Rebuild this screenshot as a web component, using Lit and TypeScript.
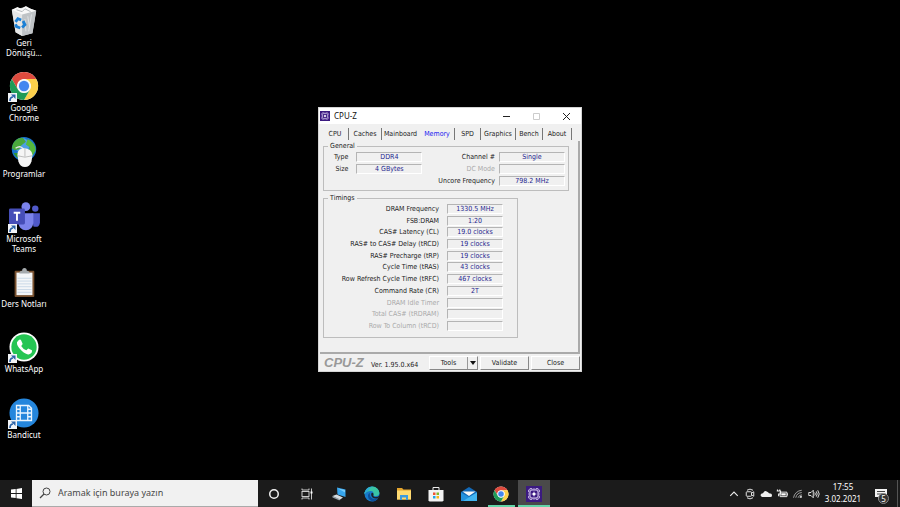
import { LitElement, html, svg, css, TemplateResult } from "lit";
import { customElement, property } from "lit/decorators.js";
import { classMap } from "lit/directives/class-map.js";

const chromeArt = svg`
  <circle cx="16" cy="16" r="15" fill="#fff"/>
  <path d="M3 8.5A15 15 0 0 1 29 8.5H16A7.5 7.5 0 0 0 9.5 19.7Z" fill="#dd4b3e"/>
  <path d="M29 8.5A15 15 0 0 1 16 31L22.5 19.7A7.5 7.5 0 0 0 16 8.5Z" fill="#fdd04b"/>
  <path d="M16 31A15 15 0 0 1 3 8.5L9.5 19.7A7.5 7.5 0 0 0 22.5 19.7Z" fill="#1f9b57"/>
  <circle cx="16" cy="16" r="7" fill="#f4f6f8"/>
  <circle cx="16" cy="16" r="5.5" fill="#4486f0"/>`;

const chipArt = svg`
  <rect width="32" height="32" fill="#3b1a80"/>
  <g fill="none" stroke="#d9cbf0" stroke-width="2">
    <rect x="8" y="8" width="16" height="16" rx="4"/>
    <path d="M12 8V5H8V8H5V12H8M20 8V5H24V8H27V12H24M12 24V27H8V24H5V20H8M20 24V27H24V24H27V20H24M16 8V4M16 28V24M8 16H4M28 16H24" stroke-width="1.5"/>
    <path d="M16 11V21M11 16H21" stroke-width="1.4"/>
  </g>
  <circle cx="16" cy="16" r="3" fill="#fff"/>`;

const desktopArt: Record<string, TemplateResult> = {
  bin: svg`
    <path d="M3 4L18 1L29 5L25 29L14 32L7 28Z" fill="#d3d6d8"/>
    <path d="M3 4L14 8L14 32L7 28Z" fill="#e4e6e7"/>
    <path d="M14 8L29 5L25 29L14 32Z" fill="#bfc3c6"/>
    <path d="M3 4L9 1L13 3L18 0L23 3L29 5L14 9Z" fill="#f8f8f8"/>
    <path d="M8 4L14 6L17 3L23 6" fill="none" stroke="#aeb3b7"/>
    <path d="M20 11L22 23M24 9L21 27M17 14L18 27" stroke="#dfe2e4" fill="none"/>
    <g fill="none" stroke="#1b80d6" stroke-width="3">
      <path d="M7 17L9.500 13.500L13 15M15 16L17 20L14 23M12 23.500L8 22L7 19.500"/>
    </g>`,
  chrome: chromeArt,
  globe: svg`
    <circle cx="16" cy="13" r="13" fill="#1973cc"/>
    <circle cx="14" cy="9" r="8" fill="#6ebcf2" opacity=".6"/>
    <path d="M4 8Q8 0 15 1L18 5L13 9L11 13L6 14L3 12Z" fill="#4aa83c"/>
    <path d="M20 2Q28 6 28.500 14L25 20L21 16L22 11L18 8Z" fill="#57b93d"/>
    <path d="M5 17L11 17L12 23Q7 22 5 17Z" fill="#329634"/>
    <path d="M7 12Q13 8 16 14" fill="none" stroke="#e5e5e5" stroke-width="1.5"/>
    <path d="M9 19Q9 12 16 12Q24 12 25 19L24 26Q22 32 17 32Q12 32 10 26Z" fill="#f5f5f5"/>
    <path d="M9 20Q17 23 25 20M17 12V21" fill="none" stroke="#bbb"/>`,
  teams: svg`
    <circle cx="18" cy="5" r="4.700" fill="#7b83eb"/>
    <circle cx="28" cy="7" r="3.400" fill="#5059c9"/>
    <path d="M24 12H33V22Q32 28 26 26Z" fill="#5059c9"/>
    <path d="M10 12H26V22Q25 30 18 30Q11 30 10 22Z" fill="#7b83eb"/>
    <rect x="0" y="7" width="17" height="17" rx="1.500" fill="#464eb8"/>
    <path d="M5 11.500H12M8.500 11.500V20" stroke="#fff" stroke-width="2"/>`,
  notes: svg`
    <rect x="6" y="4" width="21" height="28" rx="1" fill="#77502f"/>
    <rect x="8" y="6" width="17" height="24" fill="#f4f6f8"/>
    <path d="M9 12H24M9 15H24M9 18H24M9 21H24M9 24H24M9 27H24" stroke="#c9d8e6"/>
    <path d="M11 7Q11 4 14 4Q14 1 16.500 1Q19 1 19 4Q22 4 22 7Z" fill="#a5aaad"/>`,
  whatsapp: svg`
    <circle cx="16" cy="16" r="15.500" fill="#fff"/>
    <circle cx="16" cy="16" r="13.500" fill="#25c553"/>
    <path d="M10 9Q12 7 13 9L14.500 12.500Q14.500 13.500 13 15Q15 18.500 18.500 19.500L20.500 17.500L24.500 19.500Q25 23 21 24Q18 24 13.500 20Q8 15 8.500 11Z" fill="#fff"/>`,
  film: svg`
    <circle cx="16" cy="16" r="15.500" fill="#2586dc"/>
    <g fill="none" stroke="#eaf5ff" stroke-width="1.400">
      <path d="M8 8H21L24 11V24H8ZM12 8V24M20 8V24M12 16H20M8 12H12M8 16H12M8 20H12M20 12H24M20 16H24M20 20H24"/>
    </g>`,
};

const taskArt: Record<string, TemplateResult> = {
  cortana: svg`<circle cx="16" cy="16" r="8.500" fill="none" stroke="#f2f2f2" stroke-width="3"/>`,
  view: svg`<g fill="none" stroke="#ddd" stroke-width="1.800">
    <rect x="6" y="11" width="14" height="10"/><path d="M6 5V8H20V5M6 27V24H20V27M25 5V27"/></g>
    <rect x="23" y="11" width="4" height="4" fill="#fff"/>`,
  computer: svg`
    <path d="M12 3L29 7V22L13 17Z" fill="#36a5ed"/><path d="M14 5L28 8V13Z" fill="#79ccfa"/>
    <path d="M3 20L11 17L24 23L17 28Z" fill="#d7dde1"/><path d="M3 20L17 26V29L3 23Z" fill="#929ca3"/>`,
  edge: svg`
    <circle cx="16" cy="16" r="15" fill="#1779c9"/>
    <path d="M1 13Q5 1 17 1Q29 2 31 14Q30 21 22 20Q18 20 19 17Q20 9 12 10Q6 10 1 16Z" fill="#3ac5a5"/>
    <path d="M1 13Q6 1 18 1Q10 3 8 10Q4 11 1 16Z" fill="#2ba6db"/>
    <path d="M12 14Q10 23 19 26Q24 27 28 24Q24 31 17 31Q7 27 8 18Q9 15 12 14Z" fill="#0c4f98"/>
    <path d="M19 17Q17 21 23 22Q28 22 31 19L29 24Q21 27 16 22Q13 18 15 14Q19 12 19 17Z" fill="#1e2328"/>`,
  folder: svg`
    <path d="M2 4H12L15 7H30V27H2Z" fill="#e5a52d"/><rect x="2" y="9" width="28" height="18" fill="#ffdb72"/>
    <path d="M8 28V18H24V28H20V23H12V28Z" fill="#3d9be0"/>`,
  store: svg`
    <path d="M10 9V3H22V9" fill="none" stroke="#eee" stroke-width="2"/>
    <path d="M1 8H31V29L29 31H3L1 29Z" fill="#f3f3f3"/>
    <path d="M10 13H15V18H10Z" fill="#ef5532"/><path d="M17 13H22V18H17Z" fill="#80b928"/>
    <path d="M10 20H15V25H10Z" fill="#22a4e5"/><path d="M17 20H22V25H17Z" fill="#f9b817"/>`,
  mail: svg`
    <path d="M0 12L16 2L32 12V30H0Z" fill="#1269b7"/>
    <path d="M0 13L16 22L32 13V30H0Z" fill="#2492de"/><path d="M32 13V30H4Z" fill="#42b5f1"/>
    <path d="M3 11H29L16 20Z" fill="#f7f7f7"/>`,
  chrome: chromeArt,
  cpuz: chipArt,
};

const trayArt: [string, TemplateResult][] = [
  ["Show hidden icons", svg`<path d="M3 10.500L8 5.500L13 10.500" fill="none" stroke="#eee" stroke-width="1.500"/>`],
  ["Meet now", svg`<g fill="none" stroke="#e4e4e4" stroke-width="1.300"><rect x="3" y="5" width="7" height="6" rx="1"/><path d="M10 7L13 5V11L10 9M4 3Q8 0 12 3M4 13Q8 16 12 13"/></g>`],
  ["OneDrive", svg`<path d="M3 12Q0 11 1 8.500Q2 7 4 7Q6 3 9 4.500Q11 5 12 7Q16 7 16 10Q16 12 14 12Z" fill="#efefef"/>`],
  ["Battery", svg`<path d="M5.500 5.500H14.500V11.500H5.500ZM15.500 7V10" fill="none" stroke="#eee" stroke-width="1.300"/><path d="M7 7H13V10H7Z" fill="#fff"/><path d="M1 4H6V8H3.500V11M2 2V4M5 2V4" stroke="#eee" stroke-width="1.500" fill="none"/>`],
  ["Network", svg`<g fill="none" stroke="#aaa" stroke-width="1.200"><path d="M2 13A12 12 0 0 1 13 3M5 13A9 9 0 0 1 13 6M8 13A6 6 0 0 1 13 9"/></g><path d="M10 13A4 4 0 0 1 13 10V13Z" fill="#eee"/>`],
  ["Volume", svg`<g fill="none" stroke="#eee" stroke-width="1.200"><path d="M1 6H4L7 3V13L4 10H1ZM9 6Q10.500 8 9 10M11 4.500Q13.500 8 11 11.500M13 3Q17 8 13 13"/></g>`],
];

@customElement("desktop-shortcut")
class DesktopShortcut extends LitElement {
  @property() icon = "";
  @property() label = "";
  @property({ type: Boolean }) linked = false;

  static styles = css`
    :host { display: block; }
    .shortcut { display: flex; flex-direction: column; align-items: center; gap: 1px; color: #fff;
      text-decoration: none; text-align: center; font: 8px/10px "Noto Sans", sans-serif; }
    .picture { position: relative; display: flex; }
    .art { width: 30px; height: 32px; overflow: visible; }
    .arrow { position: absolute; left: -1px; bottom: 0; width: 9px; height: 9px; }
    .label { white-space: pre-line; }
  `;

  render() {
    return html`<a class="shortcut" href="#">
      <span class="picture">
        <svg class="art" viewBox="0 0 32 32" aria-hidden="true">${desktopArt[this.icon]}</svg>
        ${this.linked
          ? html`<svg class="arrow" viewBox="0 0 9 9" aria-hidden="true"><rect width="9" height="9" fill="#f1f3f6"/><path d="M2 8Q2 4 5 4" fill="none" stroke="#2a62a8" stroke-width="1.700"/><path d="M3 1.500H7.500V6Z" fill="#2a62a8"/></svg>`
          : ""}
      </span>
      <span class="label">${this.label}</span>
    </a>`;
  }
}

interface Readout { label: string; value: string; off?: boolean; }

const typeRows: Readout[] = [
  { label: "Type", value: "DDR4" },
  { label: "Size", value: "4 GBytes" },
];
const channelRows: Readout[] = [
  { label: "Channel #", value: "Single" },
  { label: "DC Mode", value: "", off: true },
  { label: "Uncore Frequency", value: "798.2 MHz" },
];
const timingRows: Readout[] = [
  { label: "DRAM Frequency", value: "1330.5 MHz" },
  { label: "FSB:DRAM", value: "1:20" },
  { label: "CAS# Latency (CL)", value: "19.0 clocks" },
  { label: "RAS# to CAS# Delay (tRCD)", value: "19 clocks" },
  { label: "RAS# Precharge (tRP)", value: "19 clocks" },
  { label: "Cycle Time (tRAS)", value: "43 clocks" },
  { label: "Row Refresh Cycle Time (tRFC)", value: "467 clocks" },
  { label: "Command Rate (CR)", value: "2T" },
  { label: "DRAM Idle Timer", value: "", off: true },
  { label: "Total CAS# (tRDRAM)", value: "", off: true },
  { label: "Row To Column (tRCD)", value: "", off: true },
];

@customElement("cpuz-window")
class CpuzWindow extends LitElement {
  static styles = css`
    :host { display: block; box-sizing: border-box; border: 1px solid #d4d4d4; background: #f0f0f0;
      color: #222; font: 7px/10px "DejaVu Sans Condensed", "DejaVu Sans", sans-serif; }
    * { box-sizing: border-box; }
    button { font: inherit; color: inherit; border: 0; padding: 0; background: none; }
    .title { display: flex; align-items: center; height: 16px; background: #fff; }
    .chip { width: 10px; height: 10px; margin: 0 4px 0 1px; }
    .name { flex: 1; margin: 0; font: 8px/12px "Noto Sans", sans-serif; color: #111; }
    .caption { width: 30px; height: 16px; display: flex; align-items: center; justify-content: center; }
    .caption svg { width: 9px; height: 9px; }
    .tabs { display: grid; grid-template-columns: 27fr 33fr 38fr 35fr 26fr 35fr 27fr 29fr; padding: 4px 9px 1px 3px; }
    .tab { height: 12px; border-right: 1px solid #777; white-space: nowrap; }
    .tab.plain { border-right-color: transparent; }
    .tab.active { color: #1818f0; }
    .page { margin: 0 1px; padding: 0 9px 14px 3px; border: solid #aaa; border-width: 0 2px 2px 0; }
    .group { margin: 0; min-width: 0; border: 1px solid #bdbdbd; }
    .legend { margin-left: 1px; padding: 0 2px; height: 10px; }
    .general { display: flex; justify-content: space-between; height: 50px; padding: 0 3px; }
    .timings { width: 195px; margin-top: 2px; padding: 0 14px 0 3px; height: 145px; }
    .rows { display: grid; grid-template-columns: auto 66px; grid-auto-rows: 12px; column-gap: 4px; align-items: center; }
    .rows.type { column-gap: 8px; padding-left: 7px; }
    .rows.timing { grid-template-columns: 1fr 56px; column-gap: 8px; height: 129px; grid-template-rows: repeat(11, 1fr); }
    .label { text-align: right; white-space: nowrap; }
    .label.off { color: #aaa; }
    .value { width: 100%; height: 10px; padding: 0; margin: 0; border: 1px solid; border-color: #b4b4b4 #fff #fff #b4b4b4;
      background: #f0f0f0; color: #24248f; font: inherit; line-height: 8px; text-align: center; border-radius: 0; outline: 0; }
    .footer { display: grid; grid-template-columns: 45px 1fr 49px 49px 49px; column-gap: 2px; padding: 2px 1px 1px 5px; align-items: center; height: 17px; }
    .brand { font: italic bold 13px/14px "Liberation Sans", sans-serif; color: #999; }
    .version { padding-top: 4px; white-space: nowrap; }
    .push, .split { height: 14px; border: 1px solid; border-color: #fff #888 #888 #fff; }
    .split { display: grid; grid-template-columns: 1fr 10px; }
    .drop { border-left: 1px solid #999; display: flex; align-items: center; justify-content: center; }
    .drop svg { width: 6px; height: 4px; }
  `;

  private rows(kind: string, list: Readout[]) {
    return html`<div class="rows ${kind}">${list.map((row, i) => html`
      <label class=${classMap({ label: true, off: !!row.off })} for="${kind}${i}">${row.label}</label>
      <input class="value" id="${kind}${i}" .value=${row.value} readonly ?disabled=${!!row.off}>`)}</div>`;
  }

  render() {
    const tabs = ["CPU", "Caches", "Mainboard", "Memory", "SPD", "Graphics", "Bench", "About"];
    return html`
      <header class="title">
        <svg class="chip" viewBox="0 0 32 32" aria-hidden="true">${chipArt}</svg>
        <h1 class="name">CPU-Z</h1>
        <button class="caption" aria-label="Minimize"><svg viewBox="0 0 9 9"><path d="M1 4.500H8" stroke="#222"/></svg></button>
        <button class="caption" aria-label="Maximize" disabled><svg viewBox="0 0 9 9"><path d="M1.500 1.500H7.500V7.500H1.500Z" fill="none" stroke="#ccc"/></svg></button>
        <button class="caption" aria-label="Close window"><svg viewBox="0 0 9 9"><path d="M1 1L8 8M8 1L1 8" stroke="#222"/></svg></button>
      </header>
      <div class="tabs" role="tablist">${tabs.map((t) => html`
        <button role="tab" aria-selected=${t === "Memory"} class=${classMap({ tab: true, active: t === "Memory", plain: t === "Mainboard" })}>${t}</button>`)}
      </div>
      <div class="page">
        <fieldset class="group general"><legend class="legend">General</legend>
          ${this.rows("type", typeRows)}${this.rows("channel", channelRows)}
        </fieldset>
        <fieldset class="group timings"><legend class="legend">Timings</legend>${this.rows("timing", timingRows)}</fieldset>
      </div>
      <footer class="footer">
        <span class="brand">CPU-Z</span>
        <span class="version">Ver. 1.95.0.x64</span>
        <span class="split"><button>Tools</button><button class="drop" aria-label="Tools menu"><svg viewBox="0 0 6 4"><path d="M0 0H6L3 4Z" fill="#111"/></svg></button></span>
        <button class="push">Validate</button>
        <button class="push">Close</button>
      </footer>`;
  }
}

@customElement("task-bar")
class TaskBar extends LitElement {
  static styles = css`
    :host { display: flex; align-items: stretch; height: 27px; background: #1b1b1b; color: #fff;
      font: 8px/12px "Noto Sans", sans-serif; }
    * { box-sizing: border-box; }
    button { font: inherit; color: inherit; border: 0; padding: 0; background: none; display: flex;
      align-items: center; justify-content: center; }
    .start { width: 32px; }
    .start svg { width: 11px; height: 11px; }
    .search { display: flex; align-items: center; gap: 7px; width: 226px; padding-left: 7px; background: #f1f1f1;
      border-bottom: 1px solid #aaa; }
    .search svg { width: 12px; height: 12px; flex: none; }
    .query { flex: 1; min-width: 0; border: 0; outline: 0; padding: 0; background: none;
      font: 9px/14px "Noto Sans", sans-serif; }
    .query::placeholder { color: #484848; opacity: 1; }
    .apps { display: grid; grid-template-columns: repeat(9, 1fr); width: 292px; margin-right: auto; }
    .app { border-bottom: 2px solid transparent; padding-top: 2px; }
    .app svg { width: 16px; height: 16px; }
    .app.running { border-bottom-color: #62d5a8; margin: 0 3px; }
    .app.active { background: #4a4a4a; margin: 0; }
    .tray { display: flex; }
    .status { width: 16px; }
    .status svg { width: 12px; height: 12px; }
    .clock { width: 42px; text-align: center; padding-top: 1px; white-space: nowrap; }
    .notices { width: 33px; position: relative; }
    .notices svg { width: 12px; height: 12px; }
    .badge { position: absolute; right: 8px; bottom: 3px; width: 11px; height: 11px; border: 1px solid #888;
      border-radius: 50%; background: #333; line-height: 9px; text-align: center; }
    .peek { width: 3px; border-left: 1px solid #555; }
  `;

  render() {
    return html`
      <button class="start" aria-label="Start"><svg viewBox="0 0 11 11"><path d="M0 1.500L4.700 1V5H0ZM5.500 .900L11 0V5H5.500ZM0 6H4.700V10L0 9.500ZM5.500 6H11V11L5.500 10.200Z" fill="#fff"/></svg></button>
      <label class="search"><svg viewBox="0 0 12 12" aria-hidden="true"><circle cx="7.500" cy="4.500" r="3.500" fill="none" stroke="#444"/><path d="M5 7L1 11" stroke="#444" stroke-width="1.200"/></svg>
        <input class="query" type="search" aria-label="Search" placeholder="Aramak için buraya yazın"></label>
      <nav class="apps">${Object.entries(taskArt).map(([name, art]) => html`
        <button aria-label=${name} class=${classMap({ app: true, running: name === "chrome" || name === "cpuz", active: name === "cpuz" })}>
          <svg viewBox="0 0 32 32">${art}</svg></button>`)}</nav>
      <div class="tray">
        ${trayArt.map(([name, art]) => html`<button class="status" aria-label=${name}><svg viewBox="0 0 16 16">${art}</svg></button>`)}
        <time class="clock">17:55<br>3.02.2021</time>
        <button class="notices" aria-label="Notifications"><svg viewBox="0 0 12 12"><path d="M0 1H12V9H6L3 12V9H0Z" fill="#f3f3f3"/><path d="M2 3.500H10M2 6H8" stroke="#444"/></svg><span class="badge">5</span></button>
        <span class="peek"></span>
      </div>`;
  }
}

@customElement("app-root")
class AppRoot extends LitElement {
  static styles = css`
    :host { display: flex; flex-direction: column; min-height: 100vh; background: #000; }
    .desktop { position: relative; flex: 1; display: flex; padding: 5px 0 18px; }
    .shortcuts { display: grid; grid-template-rows: repeat(7, 1fr); width: 48px; }
    .window { position: absolute; left: 318px; top: 107px; width: 264px; }
  `;

  render() {
    const items: [string, string, boolean][] = [
      ["bin", "Geri\nDönüşü...", false],
      ["chrome", "Google\nChrome", true],
      ["globe", "Programlar", false],
      ["teams", "Microsoft\nTeams", true],
      ["notes", "Ders Notları", false],
      ["whatsapp", "WhatsApp", true],
      ["film", "Bandicut", true],
    ];
    return html`
      <main class="desktop">
        <nav class="shortcuts">${items.map(([icon, label, linked]) => html`
          <desktop-shortcut .icon=${icon} .label=${label} .linked=${linked}></desktop-shortcut>`)}</nav>
        <cpuz-window class="window"></cpuz-window>
      </main>
      <task-bar></task-bar>`;
  }
}
